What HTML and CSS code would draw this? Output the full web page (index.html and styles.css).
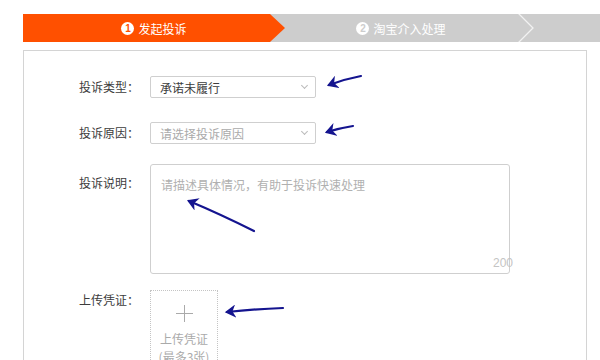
FILE: index.html
```html
<!DOCTYPE html>
<html lang="zh">
<head>
<meta charset="utf-8">
<link rel="stylesheet" href="styles.css">
</head>
<body>
<div class="page">
  <div class="steps">
    <div class="step active"><span class="num">1</span><span>发起投诉</span></div>
    <div class="step second"><span class="num">2</span><span>淘宝介入处理</span></div>
    <svg class="chev" width="18" height="28" viewBox="0 0 18 28"><polyline points="1,-1 16,14 1,29" fill="none" stroke="#f2f2f2" stroke-width="1.3"/></svg>
    <div class="rest"></div>
  </div>
  <div class="form">
    <div class="row">
      <div class="label">投诉类型：</div>
      <div class="select"><span>承诺未履行</span><span class="caret"></span></div>
    </div>
    <div class="row">
      <div class="label">投诉原因：</div>
      <div class="select placeholder"><span>请选择投诉原因</span><span class="caret"></span></div>
    </div>
    <div class="row top">
      <div class="label pad-ta">投诉说明：</div>
      <div class="textarea">
        <span class="ph">请描述具体情况，有助于投诉快速处理</span>
        <span class="count">200</span>
      </div>
    </div>
    <div class="row top">
      <div class="label pad-up">上传凭证：</div>
      <div class="upload">
        <div class="plus"></div>
        <div class="up-text">上传凭证</div>
        <div class="up-text">(最多3张)</div>
      </div>
    </div>
  </div>
</div>
<svg class="notes" width="600" height="360" viewBox="0 0 600 360">
  <defs>
    <marker id="ah" markerWidth="6" markerHeight="6" refX="4" refY="3" orient="auto" markerUnits="strokeWidth">
      <path d="M0,0 L5,3 L0,6 L1.5,3 Z" fill="#14148f"/>
    </marker>
  </defs>
  <g stroke="#14148f" stroke-width="2.2" fill="none" stroke-linecap="round" marker-end="url(#ah)">
    <path d="M361,76 Q345,79 329,85"/>
    <path d="M353,126 Q340,128 327,132"/>
    <path d="M254,231 Q220,214 189,201"/>
    <path d="M283,308 Q255,309 227,312"/>
  </g>
</svg>
</body>
</html>
```

FILE: styles.css
```css
* { box-sizing: border-box; }
body {
  margin: 0;
  background: #fff;
  font-family: "Noto Sans CJK SC", "Noto Sans", sans-serif;
  font-size: 12px;
  color: #3c3c3c;
  width: 600px;
  height: 360px;
  overflow: hidden;
  position: relative;
}
.page {
  padding: 14px 0 0 23px;
}
.steps {
  display: flex;
  height: 28px;
  background: #cdcdcd;
}
.step {
  display: flex;
  align-items: center;
  justify-content: center;
  gap: 4px;
  color: #fff;
  font-size: 12px;
  height: 28px;
}
.step.active {
  width: 262px;
  background: #ff5000;
  clip-path: polygon(0 0, calc(100% - 15px) 0, 100% 50%, calc(100% - 15px) 100%, 0 100%);
}
.step.second {
  width: 232px;
}
.num {
  width: 13px;
  height: 13px;
  border-radius: 50%;
  background: #fff;
  color: #ff5000;
  font-family: "Liberation Sans", sans-serif;
  font-weight: bold;
  font-size: 10px;
  line-height: 13px;
  text-align: center;
}
.second .num { color: #cdcdcd; }
.chev { display: block; flex: none; }
.rest { flex: 1; }
.form {
  margin-top: 8px;
  width: 564px;
  height: 320px;
  border: 1px solid #d4d4d4;
  padding-top: 25px;
  display: flex;
  flex-direction: column;
  gap: 24px;
}
.row {
  display: flex;
  align-items: center;
  gap: 11px;
}
.row.top { align-items: flex-start; }
.row:nth-child(3) { margin-top: -4px; }
.row:nth-child(4) { margin-top: -8px; }
.label {
  width: 115px;
  text-align: right;
  line-height: 18px;
  color: #3c3c3c;
}
.pad-ta { padding-top: 10px; }
.pad-up { padding-top: 1px; }
.select {
  width: 166px;
  height: 22px;
  border: 1px solid #cfcfcf;
  border-radius: 2px;
  display: flex;
  align-items: center;
  justify-content: space-between;
  padding: 0 8px 0 9px;
  color: #3c3c3c;
}
.select.placeholder { color: #aaa; }
.caret {
  width: 5px;
  height: 5px;
  border-right: 1px solid #bbb;
  border-bottom: 1px solid #bbb;
  transform: rotate(45deg);
  margin-top: -3px;
}
.textarea {
  position: relative;
  width: 360px;
  height: 110px;
  border: 1px solid #cfcfcf;
  border-radius: 3px;
  padding: 11px 10px;
  color: #b0b0b0;
  line-height: 18px;
}
.count {
  position: absolute;
  right: -4px;
  bottom: 1px;
  color: #c4c4c4;
  font-family: "Liberation Sans", sans-serif;
  font-size: 12px;
}
.upload {
  width: 68px;
  height: 80px;
  border: 1px dotted #c4c4c4;
  display: flex;
  flex-direction: column;
  align-items: center;
  padding-top: 14px;
  color: #aaa;
}
.plus {
  position: relative;
  width: 17px;
  height: 17px;
  margin-bottom: 8px;
}
.plus::before, .plus::after {
  content: "";
  position: absolute;
  background: #aaa;
}
.plus::before { left: 8px; top: 0; width: 1px; height: 17px; }
.plus::after { top: 8px; left: 0; height: 1px; width: 17px; }
.up-text { line-height: 18px; }
.notes {
  position: absolute;
  left: 0;
  top: 0;
  pointer-events: none;
}
```
